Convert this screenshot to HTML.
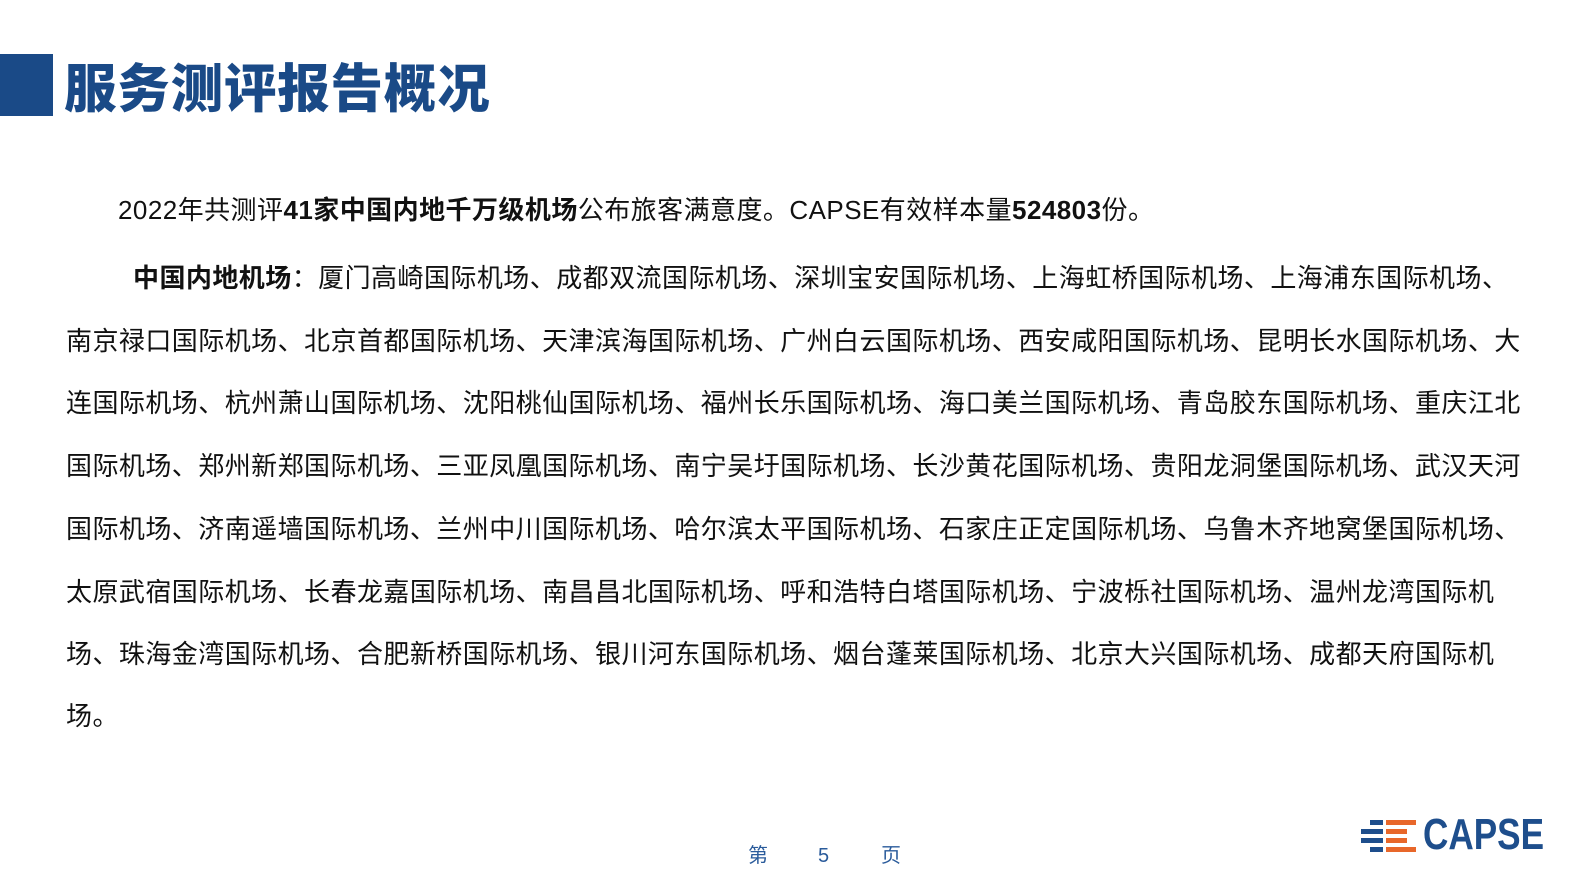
<!DOCTYPE html>
<html><head><meta charset="utf-8"><style>
body{margin:0;width:1587px;height:892px;background:#fff;position:relative;overflow:hidden;font-family:"Liberation Sans","Noto Sans CJK SC",sans-serif;}
.bar{position:absolute;left:0;top:54px;width:53px;height:62px;background:#1a4a87;}
.title{position:absolute;left:64px;top:54px;font-size:52.5px;line-height:72px;font-weight:900;color:#1a4a87;letter-spacing:0.8px;}
.l{position:absolute;white-space:nowrap;font-size:26px;line-height:40px;color:#111;letter-spacing:0.45px;}
b{font-weight:700;}
.ft{position:absolute;top:843px;font-size:20px;line-height:26px;color:#2a5b9b;}
</style></head><body>
<div class="bar"></div>
<div class="title">服务测评报告概况</div>
<div class="l" style="left:118px;top:190px;">2022年共测评<b>41家中国内地千万级机场</b>公布旅客满意度。CAPSE有效样本量<b>524803</b>份。</div>
<div class="l" style="left:133px;top:258px;"><b>中国内地机场</b>：厦门高崎国际机场、成都双流国际机场、深圳宝安国际机场、上海虹桥国际机场、上海浦东国际机场、</div>
<div class="l" style="left:66px;top:321px;">南京禄口国际机场、北京首都国际机场、天津滨海国际机场、广州白云国际机场、西安咸阳国际机场、昆明长水国际机场、大</div>
<div class="l" style="left:66px;top:383px;">连国际机场、杭州萧山国际机场、沈阳桃仙国际机场、福州长乐国际机场、海口美兰国际机场、青岛胶东国际机场、重庆江北</div>
<div class="l" style="left:66px;top:446px;">国际机场、郑州新郑国际机场、三亚凤凰国际机场、南宁吴圩国际机场、长沙黄花国际机场、贵阳龙洞堡国际机场、武汉天河</div>
<div class="l" style="left:66px;top:509px;">国际机场、济南遥墙国际机场、兰州中川国际机场、哈尔滨太平国际机场、石家庄正定国际机场、乌鲁木齐地窝堡国际机场、</div>
<div class="l" style="left:66px;top:572px;">太原武宿国际机场、长春龙嘉国际机场、南昌昌北国际机场、呼和浩特白塔国际机场、宁波栎社国际机场、温州龙湾国际机</div>
<div class="l" style="left:66px;top:634px;">场、珠海金湾国际机场、合肥新桥国际机场、银川河东国际机场、烟台蓬莱国际机场、北京大兴国际机场、成都天府国际机</div>
<div class="l" style="left:66px;top:696px;">场。</div>
<div class="ft" style="left:748px;">第</div>
<div class="ft" style="left:818px;">5</div>
<div class="ft" style="left:881px;">页</div>
<svg style="position:absolute;left:1340px;top:805px" width="220" height="52">
<g fill="#1e4e8c"><rect x="30" y="15" width="13" height="5"/><rect x="21" y="24" width="22" height="5"/><rect x="21" y="33" width="22" height="5"/><rect x="30" y="42" width="13" height="5"/></g>
<g fill="#e8672a"><rect x="46" y="15" width="30" height="5"/><rect x="46" y="24" width="21" height="5"/><rect x="46" y="33" width="21" height="5"/><rect x="46" y="42" width="30" height="5"/></g>
<text x="83" y="44" font-family="Liberation Sans,sans-serif" font-weight="700" font-size="44" fill="#1e4e8c" textLength="121" lengthAdjust="spacingAndGlyphs">CAPSE</text>
</svg>
</body></html>
